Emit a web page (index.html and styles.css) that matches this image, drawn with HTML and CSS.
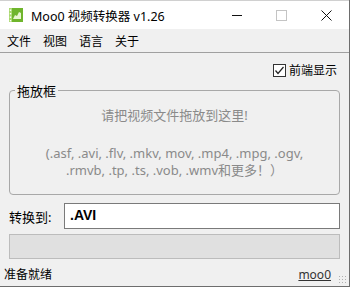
FILE: index.html
```html
<!DOCTYPE html>
<html lang="zh">
<head>
    <meta charset="UTF-8">
    <title>Moo0 视频转换器 v1.26</title>
    <link rel="stylesheet" href="styles.css">
</head>
<body>
<div class="window">
    <div class="titlebar">
        <svg class="app-icon" width="14" height="14" viewBox="0 0 14 14">
            <rect x="0" y="0" width="14" height="14" fill="#6fb52c"/>
            <rect x="0" y="0" width="3" height="14" fill="#a9d86e"/>
            <rect x="0.8" y="1.5" width="1.4" height="1.4" fill="#fff"/>
            <rect x="0.8" y="5" width="1.4" height="1.4" fill="#fff"/>
            <rect x="0.8" y="8.5" width="1.4" height="1.4" fill="#fff"/>
            <rect x="0.8" y="12" width="1.4" height="1.4" fill="#fff"/>
            <path d="M4 11 L6 7 L8 8 L10 4 L12 5 L12 11 Z" fill="#e8f5d0"/>
        </svg>
        <span class="title">Moo0 视频转换器 v1.26</span>
        <div class="controls">
            <span class="ctl min"></span>
            <span class="ctl max"></span>
            <span class="ctl close">
                <svg width="11" height="11" viewBox="0 0 11 11"><path d="M0.5 0.5 L10.5 10.5 M10.5 0.5 L0.5 10.5" stroke="#111" stroke-width="1"/></svg>
            </span>
        </div>
    </div>
    <div class="menubar">
        <span>文件</span>
        <span>视图</span>
        <span>语言</span>
        <span>关于</span>
    </div>
    <div class="content">
        <div class="topline">
            <label class="check">
                <span class="box">
                    <svg width="11" height="11" viewBox="0 0 11 11"><path d="M1.5 5.5 L4 8.5 L9.5 2" fill="none" stroke="#222" stroke-width="1.2"/></svg>
                </span>
                前端显示
            </label>
        </div>
        <fieldset class="dropbox">
            <legend>拖放框</legend>
            <p class="hint">请把视频文件拖放到这里!</p>
            <p class="formats">(.asf, .avi, .flv, .mkv, mov, .mp4, .mpg, .ogv,</p>
            <p class="formats second">.rmvb, .tp, .ts, .vob, .wmv和更多！）</p>
        </fieldset>
        <div class="convert">
            <span class="label">转换到:</span>
            <div class="field">.AVI</div>
        </div>
        <div class="progress"></div>
    </div>
    <div class="statusbar">
        <span>准备就绪</span>
        <span class="link">moo0</span>
        <span class="grip"></span>
    </div>
</div>
</body>
</html>
```

FILE: styles.css
```css
/* Window */
body {
    margin: 0;
    background: #f0f0f0;
    font-family: "Noto Sans", "Noto Sans CJK SC", sans-serif;
    font-size: 12px;
    color: #000;
}

.window {
    width: 350px;
    height: 287px;
    box-sizing: border-box;
    border-right: 1px solid #6d6d6d;
    border-bottom: 1px solid #6d6d6d;
    display: flex;
    flex-direction: column;
    overflow: hidden;
}

.titlebar {
    height: 29px;
    background: #fff;
    border-top: 1px solid #d0d0d0;
    box-sizing: border-box;
    display: flex;
    align-items: center;
    padding-left: 9px;
}

.app-icon {
    margin-right: 8px;
}

.title {
    font-size: 12.5px;
}

.controls {
    margin-left: auto;
    display: flex;
    height: 100%;
}

.ctl {
    width: 45px;
    display: flex;
    align-items: center;
    justify-content: center;
}

.min::before {
    content: "";
    width: 10px;
    border-top: 1px solid #111;
}

.max::before {
    content: "";
    width: 9px;
    height: 9px;
    border: 1px solid #c4c4c4;
}

.menubar {
    height: 23px;
    display: flex;
    align-items: center;
    gap: 12px;
    padding-left: 7px;
    border-bottom: 1px solid #a0a0a0;
}

.content {
    flex: 1;
    padding: 0 9px 0 9px;
    display: flex;
    flex-direction: column;
}

.topline {
    display: flex;
    justify-content: flex-end;
    padding: 8px 3px 0 0;
    height: 18px;
}

.check {
    display: flex;
    align-items: center;
    gap: 3px;
    font-size: 12px;
}

.box {
    width: 11px;
    height: 11px;
    border: 1px solid #333;
    background: #fff;
    display: flex;
}

.dropbox {
    margin: 2px 0 0 0;
    padding: 0;
    height: 114px;
    box-sizing: border-box;
    border: 1px solid #a8a8a8;
    border-radius: 4px;
    text-align: center;
    color: #8a8a8a;
}

.dropbox legend {
    text-align: left;
    color: #000;
    font-size: 13px;
    padding: 0 2px;
    margin-left: 5px;
}

.hint {
    margin: 5px 0 0 0;
    font-size: 13px;
}

.formats {
    margin: 20px 0 0 0;
    line-height: 18px;
    font-size: 13px;
}

.formats.second {
    margin-top: -1px;
}

.convert {
    display: flex;
    align-items: center;
    margin-top: 8px;
    height: 26px;
}

.label {
    width: 55px;
    font-size: 13px;
}

.field {
    flex: 1;
    height: 26px;
    box-sizing: border-box;
    background: #fff;
    border: 1px solid #7a7a7a;
    padding: 3px 5px;
    font-family: "Liberation Sans", sans-serif;
    font-weight: bold;
    font-size: 14px;
}

.progress {
    margin-top: 5px;
    height: 25px;
    box-sizing: border-box;
    background: #e0e0e0;
    border: 1px solid #bcbcbc;
}

.statusbar {
    height: 24px;
    display: flex;
    align-items: center;
    padding: 0 4px;
    font-size: 12px;
    position: relative;
}

.link {
    margin-left: auto;
    margin-right: 14px;
    text-decoration: underline;
    color: #333;
}

.grip {
    position: absolute;
    right: 2px;
    bottom: 2px;
    width: 9px;
    height: 9px;
    background: radial-gradient(circle, #b0b0b0 1px, transparent 1px) 0 0 / 3px 3px;
}
```
